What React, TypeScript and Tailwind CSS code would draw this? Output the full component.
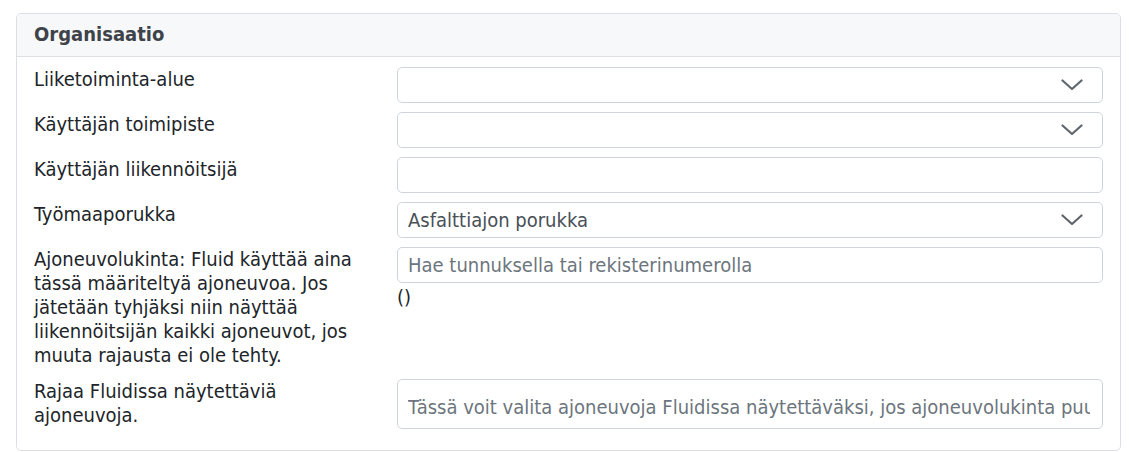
import React from "react";

const Chevron = () => (
  <svg width="22" height="12" viewBox="0 0 22 12" fill="none" className="shrink-0">
    <path d="M1.5 1.5 L11 10 L20.5 1.5" stroke="#5f666d" strokeWidth="2.2" strokeLinecap="round" strokeLinejoin="round" />
  </svg>
);

const Select = ({ value }: { value?: string }) => (
  <div className="flex h-[36px] items-center justify-between rounded-[5px] border border-[#ced4da] bg-white pl-[10px] pr-[19px]">
    <span className="text-[#495057]">{value ?? ""}</span>
    <Chevron />
  </div>
);

const Input = ({ placeholder, tall }: { placeholder?: string; tall?: boolean }) => (
  <div
    className={
      "flex items-center rounded-[5px] border border-[#ced4da] bg-white pl-[10px] pr-[12px] " +
      (tall ? "h-[50px] pt-[6px]" : "h-[36px]")
    }
  >
    <span className="min-w-0 flex-1 overflow-hidden whitespace-nowrap text-[#6c757d]">{placeholder ?? ""}</span>
  </div>
);

const Row = ({ label, children, mb }: { label: string; children: React.ReactNode; mb: string }) => (
  <div className={"flex " + mb}>
    <div className="w-[363px] shrink-0 pr-[20px] leading-[24px] text-[#212529]">{label}</div>
    <div className="min-w-0 flex-1">{children}</div>
  </div>
);

export default function App() {
  return (
    <div
      className="h-[452px] w-[1129px] bg-white pl-[16px] pt-[13px] text-[20px]"
      style={{ fontFamily: '"DejaVu Sans Condensed", "Liberation Sans", sans-serif' }}
    >
      <div className="w-[1105px] overflow-hidden rounded-[5px] border border-[#dcdfe3]">
        <div className="h-[43px] border-b border-[#dcdfe3] bg-[#f7f8fa] pl-[17px] pt-[8px] font-bold leading-[24px] text-[#3d4349]">
          Organisaatio
        </div>
        <div className="pl-[17px] pr-[17px] pt-[10px] pb-[21px]">
          <Row label="Liiketoiminta-alue" mb="mb-[9px]">
            <Select />
          </Row>
          <Row label="Käyttäjän toimipiste" mb="mb-[9px]">
            <Select />
          </Row>
          <Row label="Käyttäjän liikennöitsijä" mb="mb-[9px]">
            <Input />
          </Row>
          <Row label="Työmaaporukka" mb="mb-[9px]">
            <Select value="Asfalttiajon porukka" />
          </Row>
          <Row
            label="Ajoneuvolukinta: Fluid käyttää aina tässä määriteltyä ajoneuvoa. Jos jätetään tyhjäksi niin näyttää liikennöitsijän kaikki ajoneuvot, jos muuta rajausta ei ole tehty."
            mb="mb-[12px]"
          >
            <Input placeholder="Hae tunnuksella tai rekisterinumerolla" />
            <div className="pt-[2px] leading-[24px] text-[#212529]">()</div>
          </Row>
          <Row label="Rajaa Fluidissa näytettäviä ajoneuvoja." mb="">
            <Input tall placeholder="Tässä voit valita ajoneuvoja Fluidissa näytettäväksi, jos ajoneuvolukinta puuttuu." />
          </Row>
        </div>
      </div>
    </div>
  );
}
